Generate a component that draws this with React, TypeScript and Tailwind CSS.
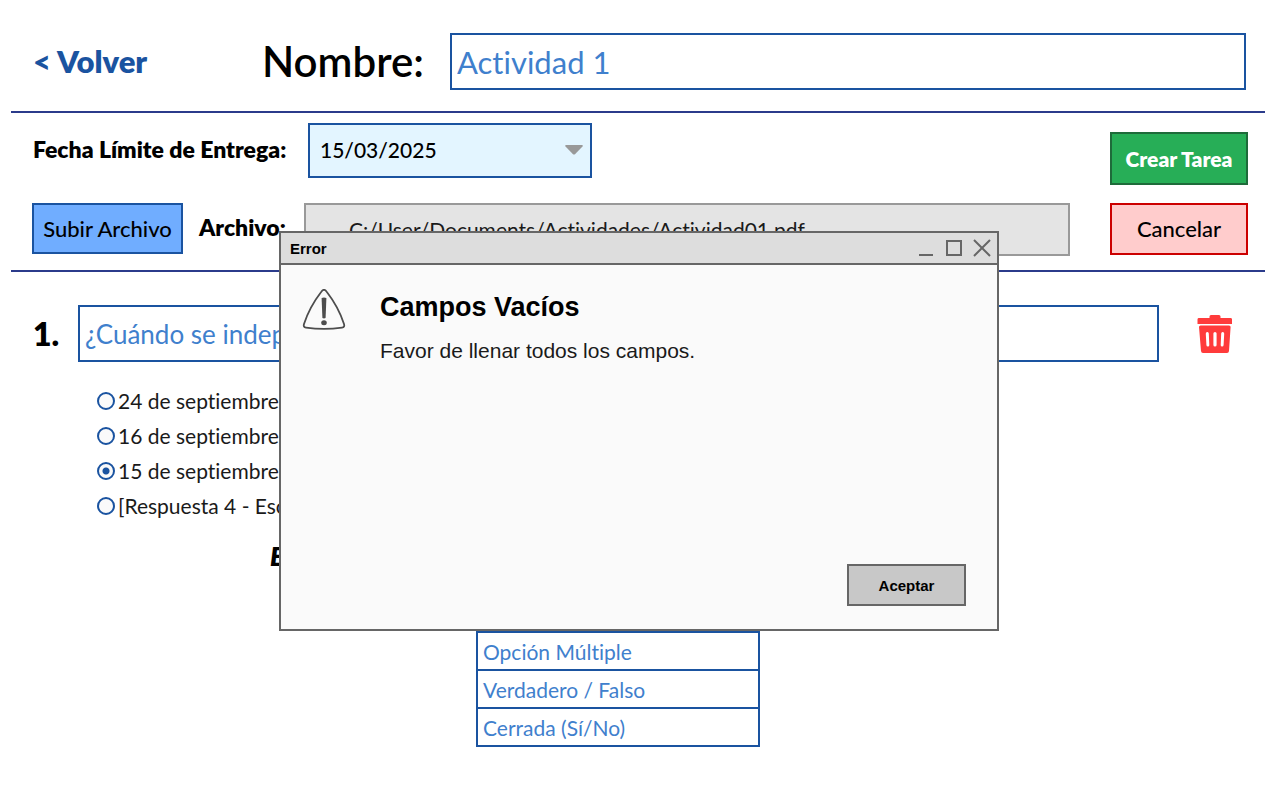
import { useState } from "react";

const answers = [
  "24 de septiembre de 1821",
  "16 de septiembre de 1810",
  "15 de septiembre de 1810",
  "[Respuesta 4 - Escribir]",
];

const questionTypes = ["Opción Múltiple", "Verdadero / Falso", "Cerrada (Sí/No)"];

function TrashIcon() {
  return (
    <svg width="36" height="38" viewBox="0 0 36 38" aria-hidden="true">
      <path
        fill="#ff3b3b"
        d="M1.5 3H12.5V1.5Q12.5 0 14 0H22Q23.500 0 23.500 1.500V3H34Q35 3 35 4.500V9H0.500V4.500Q0.500 3 1.500 3Z"
      />
      <path
        fill="#ff3b3b"
        fillRule="evenodd"
        d="M2 12Q2 10.500 3.500 10.500H32Q33.700 10.500 33.600 12L32 36Q31.800 38 30 38H6Q4.200 38 4 36ZM10.300 17Q8.700 17.100 8.800 18.700L9.400 30Q9.500 31.500 10.900 31.500Q12.400 31.400 12.300 29.900L11.800 18.500Q11.700 16.900 10.300 17ZM18 16.900Q16.400 16.900 16.400 18.500V29.900Q16.400 31.500 18 31.500Q19.600 31.500 19.600 29.900V18.500Q19.600 16.900 18 16.900ZM25.700 17Q24.300 16.900 24.200 18.500L23.700 29.900Q23.600 31.400 25.100 31.500Q26.500 31.500 26.600 30L27.200 18.700Q27.300 17.100 25.700 17Z"
      />
    </svg>
  );
}

function WarningIcon() {
  return (
    <svg width="44" height="42" viewBox="0 0 44 42" className="shrink-0" aria-hidden="true">
      <path
        d="M19.500 2.500Q22 -1 24.500 2.500Q36.500 18 42 35Q43 38.200 40 38.600Q22 41 4 38.600Q1 38.200 2 35Q7.500 18 19.500 2.500Z"
        fill="none"
        stroke="#4d4d4d"
        strokeWidth="1.800"
      />
      <path d="M19.600 9Q22 8 24.400 9L23.600 29Q22 29.800 20.400 29Z" fill="#4d4d4d" />
      <ellipse cx="22" cy="33.800" rx="2.800" ry="2.500" fill="#4d4d4d" />
    </svg>
  );
}

function ErrorDialog({ onClose }: { onClose: () => void }) {
  return (
    <div className="absolute inset-x-0 top-[231px] flex justify-center pr-[2px]">
      <section
        role="dialog"
        aria-labelledby="dialog-title"
        className="flex min-h-[400px] w-[720px] flex-col border-2 border-[#666666] bg-[#fafafa] font-['Liberation_Sans',sans-serif] text-black"
      >
        <header className="flex h-8 items-center justify-between border-b-2 border-[#666666] bg-[#dddddd] pr-[6px] pl-[9px]">
          <span className="pt-[2px] text-[15px] font-bold">Error</span>
          <div className="flex items-center gap-[10px] text-[#666666]">
            <button type="button" aria-label="Minimizar">
              <svg width="18" height="18" viewBox="0 0 18 18" stroke="currentColor" strokeWidth="2">
                <path d="M2 16H16" />
              </svg>
            </button>
            <button type="button" aria-label="Maximizar">
              <svg width="18" height="18" viewBox="0 0 18 18" fill="none" stroke="currentColor" strokeWidth="2">
                <path d="M2 2H16V16H2Z" />
              </svg>
            </button>
            <button type="button" aria-label="Cerrar" onClick={onClose}>
              <svg width="18" height="18" viewBox="0 0 18 18" stroke="currentColor" strokeWidth="2">
                <path d="M1 1L17 17M17 1L1 17" />
              </svg>
            </button>
          </div>
        </header>
        <div className="flex flex-1 gap-[34px] pt-6 pl-[21px]">
          <WarningIcon />
          <div>
            <h2 id="dialog-title" className="text-[27px] leading-9 font-bold">
              Campos Vacíos
            </h2>
            <p className="mt-3 text-[21px] leading-7 text-[#1a1a1a]">Favor de llenar todos los campos.</p>
          </div>
        </div>
        <footer className="flex justify-end pr-[31px] pb-[23px]">
          <button
            type="button"
            onClick={onClose}
            className="h-[42px] w-[119px] border-2 border-[#666666] bg-[#c8c8c8] pt-[2px] text-[15px] font-bold"
          >
            Aceptar
          </button>
        </footer>
      </section>
    </div>
  );
}

export default function App() {
  const [open, setOpen] = useState(true);
  const [answer, setAnswer] = useState(2);

  return (
    <div className="relative min-h-screen bg-white pr-[15px] pl-[11px] font-[Lato,sans-serif] text-black [font-variant-ligatures:none]">
      <header className="flex h-[113px] items-center border-b-2 border-[#2b3b8b] pt-3 pr-[19px] pl-[22px]">
        <a href="#" className="w-[229px] pb-[2px] text-[31px] leading-10 font-extrabold text-[#1a53a0]">
          &lt; Volver
        </a>
        <label htmlFor="nombre" className="w-[188px] pb-[2px] text-[42px] leading-[50px] font-semibold">
          Nombre:
        </label>
        <input
          id="nombre"
          defaultValue="Actividad 1"
          className="h-[57px] min-w-0 flex-1 border-2 border-[#1a53a0] bg-white px-[5px] text-[31px] text-[#3f80cd]"
        />
      </header>

      <section className="flex items-start justify-between border-b-2 border-[#2b3b8b] pr-[17px] pb-[14px] pl-[21px]">
        <div className="flex flex-1 flex-col gap-[25px] pt-[10px]">
          <div className="flex items-center">
            <label htmlFor="fecha" className="w-[276px] pb-[2px] pl-px text-[23px] font-extrabold">
              Fecha Límite de Entrega:
            </label>
            <div className="relative">
              <select
                id="fecha"
                className="h-[55px] w-[284px] appearance-none border-2 border-[#1a53a0] bg-[#e3f5ff] px-[10px] pb-[2px] text-[21px] font-medium"
              >
                <option>15/03/2025</option>
              </select>
              <svg
                width="20"
                height="12"
                viewBox="0 0 20 12"
                className="pointer-events-none absolute top-[21px] right-2"
                aria-hidden="true"
              >
                <path d="M2 1H18Q19.500 1 18.500 2.500L11 10.200Q10 11 9 10.200L1.500 2.500Q0.500 1 2 1Z" fill="#999999" />
              </svg>
            </div>
          </div>
          <div className="flex items-start">
            <button
              type="button"
              className="h-[51px] w-[151px] border-2 border-[#1a53a0] bg-[#70adff] text-[22px] font-medium whitespace-nowrap"
            >
              Subir Archivo
            </button>
            <label htmlFor="archivo" className="w-[121px] pt-[7px] pl-4 text-[23px] font-extrabold">
              Archivo:
            </label>
            <input
              id="archivo"
              readOnly
              value="C:/User/Documents/Actividades/Actividad01.pdf"
              className="mr-10 h-[53px] min-w-0 flex-1 border-2 border-[#999999] bg-[#e4e4e4] px-[43px] text-[21px] text-[#1a1a1a]"
            />
          </div>
        </div>
        <div className="flex w-[138px] flex-col gap-[18px] pt-[19px]">
          <button
            type="button"
            className="h-[53px] border-2 border-[#1e6b3a] bg-[#27ae57] text-[21px] font-extrabold text-white"
          >
            Crear Tarea
          </button>
          <button
            type="button"
            className="h-[52px] border-2 border-[#cc0000] bg-[#ffcccc] pb-[2px] text-[22px] font-medium"
          >
            Cancelar
          </button>
        </div>
      </section>

      <main className="pt-[33px]">
        <div className="flex items-center pr-8 pl-[22px]">
          <label htmlFor="pregunta" className="w-[45px] text-[32px] font-extrabold">
            1.
          </label>
          <input
            id="pregunta"
            defaultValue="¿Cuándo se independizó México?"
            className="h-[57px] min-w-0 flex-1 border-2 border-[#1a53a0] bg-white px-[5px] text-[26px] text-[#3f80cd]"
          />
          <button type="button" aria-label="Eliminar pregunta" className="ml-[38px]">
            <TrashIcon />
          </button>
        </div>

        <div role="radiogroup" aria-label="Respuestas" className="mt-[21px] pl-[86px]">
          {answers.map((text, i) => (
            <label key={text} className="flex h-[35px] items-center gap-[3px] text-[21px] text-[#1a1a1a]">
              <input
                type="radio"
                name="respuesta"
                checked={answer === i}
                onChange={() => setAnswer(i)}
                className="size-[18px] appearance-none rounded-full border-2 border-[#1a53a0] bg-[#fafafa] bg-clip-padding checked:bg-[radial-gradient(circle,#1a53a0_3px,#fafafa_4px)]"
              />
              {text}
            </label>
          ))}
        </div>

        <div className="mt-[17px] pl-[259px]">
          <p className="text-[26px] leading-8 font-extrabold italic">Elegir tipo de pregunta</p>
        </div>

        <div className="mt-[59px] flex justify-center pr-10">
          <ul className="w-[284px] border-2 border-[#1a53a0] bg-white text-[21px] text-[#3f80cd]">
            {questionTypes.map((type) => (
              <li key={type} className="border-b-2 border-[#1a53a0] last:border-b-0">
                <button type="button" className="block h-9 w-full px-[5px] pt-[2px] text-left">
                  {type}
                </button>
              </li>
            ))}
          </ul>
        </div>
      </main>

      {open && <ErrorDialog onClose={() => setOpen(false)} />}
    </div>
  );
}
